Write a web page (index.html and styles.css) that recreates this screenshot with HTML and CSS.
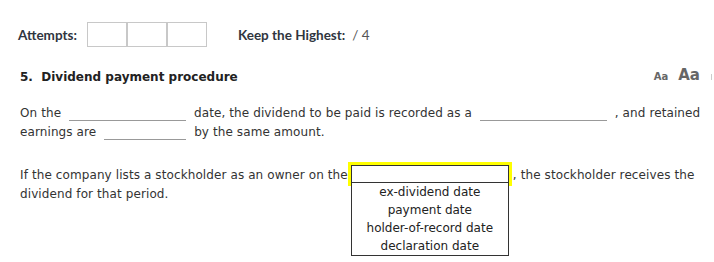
FILE: index.html
```html
<!DOCTYPE html>
<html lang="en-us">
<head>
    <meta charset="UTF-8">
    <meta name="viewport" content="width=device-width, initial-scale=1.0">
    <title>Dividend payment procedure</title>
    <link rel="stylesheet" href="styles.css">
</head>
<body>
    <div class="attempts-bar">
        <span class="bar-label">Attempts:</span>
        <div class="attempt-boxes">
            <span></span><span></span><span></span>
        </div>
        <span class="bar-label keep">Keep the Highest:</span>
        <span class="score">/ 4</span>
    </div>

    <div class="question">
        <div class="q-head">
            <h2>5.&nbsp; Dividend payment procedure</h2>
            <div class="font-size">
                <span class="aa-small">Aa</span>
                <span class="aa-large">Aa</span>
                <span class="aa-tick"></span>
            </div>
        </div>

        <p>On the <span class="blank b1"></span> date, the dividend to be paid is recorded as a <span class="blank b2"></span> , and retained earnings are <span class="blank b3"></span> by the same amount.</p>

        <p>If the company lists a stockholder as an owner on the<span class="select-box"><span class="dropdown"><span class="opt">ex-dividend date</span><span class="opt">payment date</span><span class="opt">holder-of-record date</span><span class="opt">declaration date</span></span></span>, the stockholder receives the dividend for that period.</p>
    </div>
</body>
</html>
```

FILE: styles.css
```css
body {
    margin: 0;
    padding: 0;
    background-color: #fff;
    font-family: "DejaVu Sans", sans-serif;
    color: #333;
}

/* attempts row */
.attempts-bar {
    display: flex;
    align-items: center;
    padding: 22px 0 0 18px;
    font-family: Lato, sans-serif;
    font-size: 13.5px;
    color: #2f3540;
}
.bar-label {
    font-weight: bold;
}
.attempt-boxes {
    display: flex;
    margin-left: 10px;
}
.attempt-boxes span {
    width: 38px;
    height: 23px;
    border: 1px solid #c8c8c8;
}
.keep {
    margin-left: 31px;
}
.score {
    margin-left: 7px;
    color: #555;
}

/* question */
.question {
    padding: 0 6px 58px 20px;
}
.q-head {
    display: flex;
    justify-content: space-between;
    align-items: flex-end;
    margin-top: 19px;
    margin-right: 10px;
}
.q-head h2 {
    margin: 0;
    font-family: "DejaVu Sans", sans-serif;
    font-size: 12px;
    font-weight: bold;
    color: #222;
}
.font-size {
    display: flex;
    align-items: baseline;
    color: #666;
    font-weight: bold;
    margin-right: -14px;
}
.aa-small {
    font-size: 10px;
}
.aa-large {
    font-size: 15px;
    margin-left: 10px;
}
.aa-tick {
    width: 1px;
    height: 6px;
    background: #ccc;
    margin-left: 11px;
}

.question p {
    margin: 20px 0 0 0;
    font-size: 12px;
    line-height: 19px;
    letter-spacing: 0.1px;
    color: #333;
}
.question p + p {
    margin-top: 23px;
}

.blank {
    display: inline-block;
    height: 0;
    border-bottom: 1px solid #999;
    margin: 0 4px -4px 4px;
}
.b1 { width: 117px; }
.b2 { width: 127px; }
.b3 { width: 82px; }

.select-box {
    position: relative;
    display: inline-block;
    width: 156px;
    height: 16px;
    margin: 0 4px 0 3px;
    border: 1px solid #333;
    outline: 3px solid #ffff00;
    vertical-align: -4px;
    background: #fff;
    letter-spacing: 0;
}
.dropdown {
    position: absolute;
    top: 16px;
    left: -1px;
    width: 156px;
    border: 1px solid #333;
    background: #fff;
    text-align: center;
    color: #222;
    z-index: 2;
}
.opt {
    display: block;
    line-height: 18px;
}
```
